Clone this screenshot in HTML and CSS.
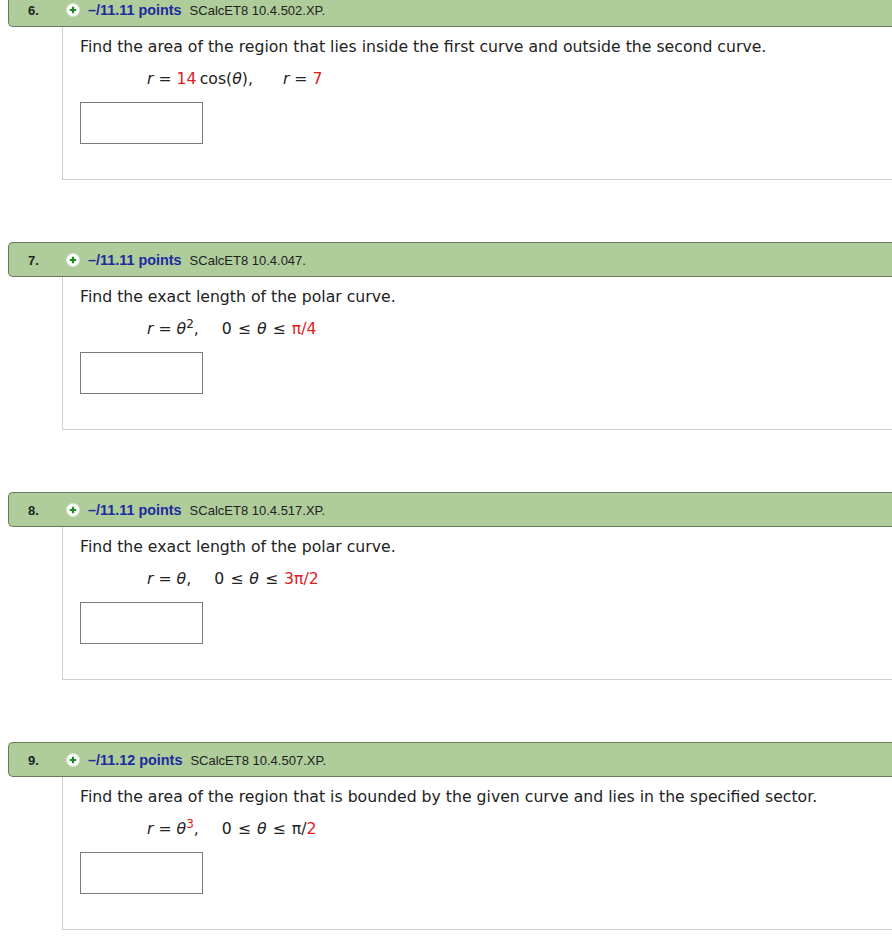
FILE: index.html
```html
<!DOCTYPE html>
<html>
<head>
<meta charset="utf-8">
<link rel="stylesheet" href="styles.css">
</head>
<body>
<div class="page">
  <div class="question">
    <div class="qhead">
      <span class="qnum">6.</span>
      <span class="plus"><svg width="14" height="14" viewBox="0 0 14 14"><circle cx="7" cy="7" r="6.5" fill="#fff" stroke="#d8e4cf"/><path d="M7 3.8v6.4M3.8 7h6.4" stroke="#1d8a22" stroke-width="2.2"/></svg></span>
      <span class="pts">–/11.11 points</span>
      <span class="ref">SCalcET8 10.4.502.XP.</span>
    </div>
    <div class="qbody">
      <p class="prompt">Find the area of the region that lies inside the first curve and outside the second curve.</p>
      <p class="math"><i>r</i> = <span class="red">14</span>&#8239;cos(<i>θ</i>),<span class="sp wide"></span><i>r</i> = <span class="red">7</span></p>
      <div class="answer"></div>
    </div>
  </div>

  <div class="question">
    <div class="qhead">
      <span class="qnum">7.</span>
      <span class="plus"><svg width="14" height="14" viewBox="0 0 14 14"><circle cx="7" cy="7" r="6.5" fill="#fff" stroke="#d8e4cf"/><path d="M7 3.8v6.4M3.8 7h6.4" stroke="#1d8a22" stroke-width="2.2"/></svg></span>
      <span class="pts">–/11.11 points</span>
      <span class="ref">SCalcET8 10.4.047.</span>
    </div>
    <div class="qbody">
      <p class="prompt">Find the exact length of the polar curve.</p>
      <p class="math"><i>r</i> = <i>θ</i><sup>2</sup>,<span class="sp"></span>0 <span class="op">≤</span> <i>θ</i> <span class="op">≤</span> <span class="red">π/4</span></p>
      <div class="answer"></div>
    </div>
  </div>

  <div class="question">
    <div class="qhead">
      <span class="qnum">8.</span>
      <span class="plus"><svg width="14" height="14" viewBox="0 0 14 14"><circle cx="7" cy="7" r="6.5" fill="#fff" stroke="#d8e4cf"/><path d="M7 3.8v6.4M3.8 7h6.4" stroke="#1d8a22" stroke-width="2.2"/></svg></span>
      <span class="pts">–/11.11 points</span>
      <span class="ref">SCalcET8 10.4.517.XP.</span>
    </div>
    <div class="qbody">
      <p class="prompt">Find the exact length of the polar curve.</p>
      <p class="math"><i>r</i> = <i>θ</i>,<span class="sp"></span>0 <span class="op">≤</span> <i>θ</i> <span class="op">≤</span> <span class="red">3π/2</span></p>
      <div class="answer"></div>
    </div>
  </div>

  <div class="question">
    <div class="qhead">
      <span class="qnum">9.</span>
      <span class="plus"><svg width="14" height="14" viewBox="0 0 14 14"><circle cx="7" cy="7" r="6.5" fill="#fff" stroke="#d8e4cf"/><path d="M7 3.8v6.4M3.8 7h6.4" stroke="#1d8a22" stroke-width="2.2"/></svg></span>
      <span class="pts">–/11.12 points</span>
      <span class="ref">SCalcET8 10.4.507.XP.</span>
    </div>
    <div class="qbody">
      <p class="prompt">Find the area of the region that is bounded by the given curve and lies in the specified sector.</p>
      <p class="math"><i>r</i> = <i>θ</i><sup class="red">3</sup>,<span class="sp"></span>0 <span class="op">≤</span> <i>θ</i> <span class="op">≤</span> π/<span class="red">2</span></p>
      <div class="answer"></div>
    </div>
  </div>
</div>
</body>
</html>
```

FILE: styles.css
```css
html, body {
  margin: 0;
  padding: 0;
  background: #fff;
  overflow: hidden;
}

.page {
  margin-top: -8px;
  width: 892px;
}

.question {
  margin-bottom: 62px;
}

.qhead {
  margin-left: 8px;
  height: 32px;
  background: #afcc9b;
  border: 1px solid #687a5c;
  border-right: none;
  border-radius: 5px 0 0 5px;
  display: flex;
  align-items: center;
  padding-top: 1px;
  font-family: "Liberation Sans", Arial, sans-serif;
  font-size: 13px;
  color: #222;
}

.qnum {
  font-weight: bold;
  width: 57px;
  padding-left: 19px;
  box-sizing: border-box;
  color: #222;
}

.plus {
  display: inline-flex;
  width: 14px;
  height: 14px;
  margin-right: 8px;
}

.pts {
  font-weight: bold;
  font-size: 14.4px;
  color: #1c2ba0;
  margin-right: 8px;
}

.ref {
  color: #222;
}

.qbody {
  margin-left: 62px;
  border-left: 1px solid #cfcfcf;
  border-bottom: 1px solid #cfcfcf;
  height: 152px;
  padding-left: 17px;
  font-family: "DejaVu Sans", Verdana, sans-serif;
  color: #222;
}

.prompt {
  margin: 0;
  padding-top: 10px;
  font-size: 15.7px;
  line-height: 20px;
}

.math {
  margin: 12px 0 0 67px;
  font-size: 15.7px;
  line-height: 20px;
}

.math i {
  font-style: italic;
}

.math sup {
  font-size: 12px;
  line-height: 0;
  vertical-align: 6px;
}

.op {
  margin: 0 1px;
}

.sp {
  display: inline-block;
  width: 23px;
}

.sp.wide {
  width: 30px;
}

.red {
  color: #e0201e;
}

.answer {
  margin-top: 13px;
  width: 121px;
  height: 40px;
  border: 1px solid #7a7a7a;
}
```
